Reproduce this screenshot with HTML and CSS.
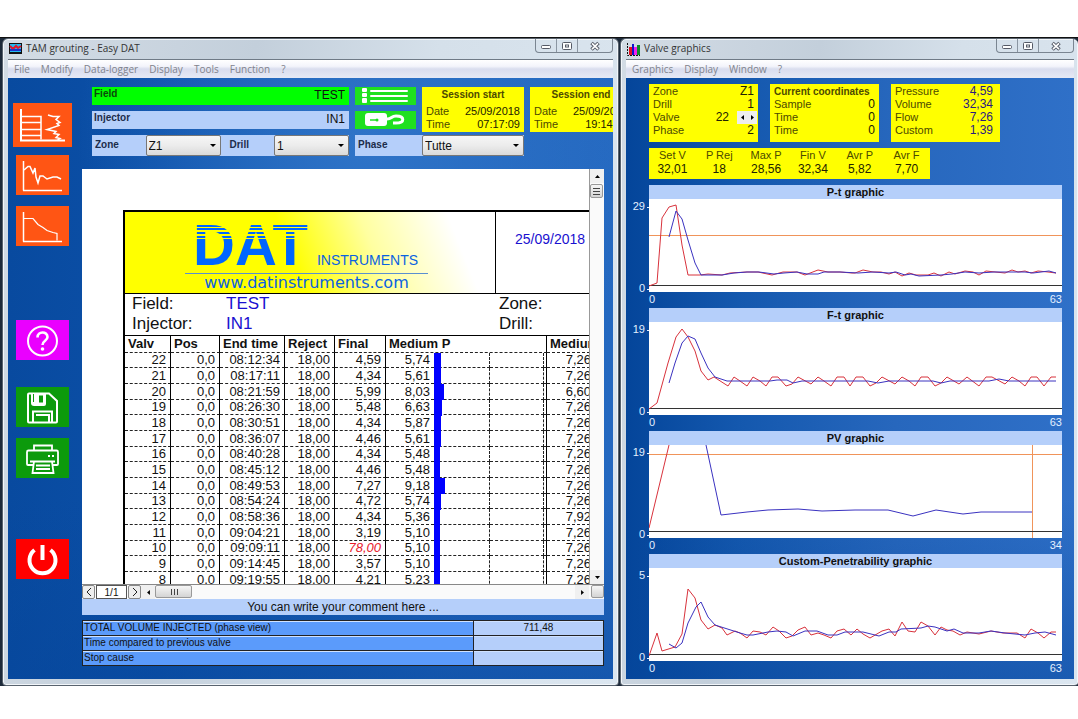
FILE: index.html
```html
<!doctype html>

<html lang="en">
<head>
	<meta charset="utf-8">

	<title>TAM grouting - Easy DAT</title>

	<link rel="stylesheet" href="styles.css">
</head>

<body>
	<div class="desktop">
		<section class="window">
			<header class="titlebar">
				<svg class="app-icon" width="13" height="11" viewBox="0 0 13 11"><rect width="13" height="11" fill="#111"/><rect x="1" y="1" width="11" height="8" fill="#22b8f0"/><path d="M1 3l3 3 3-3 2 2 3-2" fill="none" stroke="#e0142c" stroke-width="2"/><path d="M1 7h11" stroke="#1b30c8" stroke-width="2"/></svg>
				<h1>TAM grouting - Easy DAT</h1>
				<div class="controls">
					<button aria-label="Minimize"><svg width="12" height="10" viewBox="0 0 12 10"><rect x="1.500" y="4.500" width="9" height="3" rx="1" fill="#fff" stroke="#555a66"/></svg></button>
					<button aria-label="Maximize"><svg width="12" height="10" viewBox="0 0 12 10"><rect x="1.500" y="1.500" width="9" height="7" rx="1" fill="#fff" stroke="#555a66"/><rect x="4.500" y="4" width="3" height="2" fill="#fff" stroke="#555a66"/></svg></button>
					<button class="close" aria-label="Close"><svg width="12" height="10" viewBox="0 0 12 10"><path d="M2.500 2l7 6.500M9.500 2l-7 6.500" stroke="#555a66" stroke-width="3.600"/><path d="M3 2.400l6 5.700M9 2.400L3 8.100" stroke="#fff" stroke-width="1.600"/></svg></button>
				</div>
			</header>
			<nav class="menu">
				<button>File</button>
				<button>Modify</button>
				<button>Data-logger</button>
				<button>Display</button>
				<button>Tools</button>
				<button>Function</button>
				<button>?</button>
			</nav>
			<div class="workspace">
				<aside class="tools">
					<button class="tool orange big" aria-label="Stratigraphy"><svg width="59" height="44" viewBox="0 0 59 44" fill="none" stroke="#fff"><path d="M8 6v32" stroke-width="2"/><path d="M7 37.500h45" stroke-width="2"/><path d="M8 13.500h20v23M8 19.500h20M8 26.500h20M8 32.500h20" stroke-width="1.500"/><path d="M35 12l5 1.500 6 0-3 3 4 3-3 1 2 2-12 4 9 2-2 2 5 1-3 3 4 1-3 2" stroke-width="1.500"/></svg></button>
					<button class="tool orange" aria-label="Trend graphic"><svg width="53" height="39" viewBox="0 0 53 39" fill="none" stroke="#fff"><path d="M7.500 5v29.500" stroke-width="1.500"/><path d="M7 34.500h39" stroke-width="1.500"/><path d="M8 14l4-3.500 2 0 3 6.500 2-5 1 9 2 6 2-7 3 0 4 3 6-2 4 0 4 2" stroke-width="1.500"/></svg></button>
					<button class="tool orange" aria-label="Curve graphic"><svg width="53" height="39" viewBox="0 0 53 39" fill="none" stroke="#fff"><path d="M7.500 5v29.500" stroke-width="1.500"/><path d="M7 34.500h39" stroke-width="1.500"/><path d="M8 11.500h9l5 6 5 3 4 3 6 2 4 1v7" stroke-width="1.200"/></svg></button>
					<button class="tool magenta" aria-label="Help"><svg width="53" height="39" viewBox="0 0 53 39" fill="none" stroke="#fff"><circle cx="26.500" cy="20" r="14.500" stroke-width="2"/><path d="M21.500 16.500c0-6.500 10-6.500 10-.5 0 4-5 3.500-5 8" stroke-width="2.600"/><circle cx="26.500" cy="28" r="1.800" fill="#fff" stroke="none"/></svg></button>
					<button class="tool green save" aria-label="Save"><svg width="53" height="39" viewBox="0 0 53 39" fill="none" stroke="#fff" stroke-width="2"><path d="M13 5.500h20l8 7.500v20.500q0 1-1 1H13q-1 0-1-1v-27q0-1 1-1z"/><path d="M15 5h15v11q0 2-2 2H18q-3 0-3-3z" fill="#fff" stroke="none"/><path d="M23 7.500h4v7h-4zM17 6h1v8h-1z" fill="#0c9a0c" stroke="none"/><path d="M17 34V23.500h19V34M20 27h13v7"/></svg></button>
					<button class="tool green print" aria-label="Print"><svg width="53" height="39" viewBox="0 0 53 39" fill="none" stroke="#fff" stroke-width="1.800"><path d="M18 12V6.500h18V12"/><path d="M17 26h-5q-1 0-1-1V13q0-1.500 1.500-1.500h28q1.500 0 1.500 1.500v12q0 1-1 1h-4"/><path d="M18 22.500h18l1.500 11.500h-21zM14 22.500h25M20 26.500h14M20 30h14"/><path d="M32 17h2M36 17h2"/></svg></button>
					<button class="tool red" aria-label="Exit"><svg width="53" height="39" viewBox="0 0 53 39" fill="none" stroke="#fff" stroke-width="4"><path d="M18.500 10a13 13 0 1 0 16 0"/><path d="M26.500 5v15"/></svg></button>
				</aside>
				<main class="main">
					<form class="session">
						<div class="session-top">
							<div class="stack names">
								<div class="field active"><label for="field">Field</label><input id="field" value="TEST"></div>
								<div class="field"><label for="injector">Injector</label><input id="injector" value="IN1"></div>
							</div>
							<div class="stack">
								<button type="button" class="mini" aria-label="List"><svg width="60" height="18" viewBox="0 0 60 18"><g fill="#fff"><rect x="7" y="1" width="5" height="4" rx="1"/><rect x="7" y="6" width="5" height="4" rx="1"/><rect x="7" y="11" width="5" height="5" rx="1"/><rect x="15" y="3" width="38" height="2" rx="1"/><rect x="15" y="8" width="38" height="2" rx="1"/><rect x="15" y="13" width="38" height="2" rx="1"/></g></svg></button>
								<button type="button" class="mini" aria-label="Unlock"><svg width="60" height="18" viewBox="0 0 60 18"><rect x="10" y="2" width="22" height="13" rx="3" fill="#fff"/><path d="M32 8c5 0 4-3 9-3 9 0 9 7 0 7h-3" fill="none" stroke="#fff" stroke-width="3"/><path d="M15 9h6" stroke="#1fe01f" stroke-width="1.500"/><circle cx="22" cy="9" r="1.500" fill="#1fe01f"/></svg></button>
							</div>
							<div class="card time">
								<h2>Session start</h2>
								<div class="pair"><span>Date</span><b>25/09/2018</b></div>
								<div class="pair"><span>Time</span><b>07:17:09</b></div>
							</div>
							<div class="card time">
								<h2>Session end</h2>
								<div class="pair"><span>Date</span><b>25/09/2018</b></div>
								<div class="pair"><span>Time</span><b>19:14:32</b></div>
							</div>
						</div>
						<div class="filters">
							<div class="names filter-pair">
								<div class="filter"><label for="zone">Zone</label><div class="select"><select id="zone"><option>Z1</option></select></div></div>
								<div class="filter"><label for="drill">Drill</label><div class="select"><select id="drill"><option>1</option></select></div></div>
							</div>
							<div class="filter phase"><label for="phase">Phase</label><div class="select"><select id="phase"><option>Tutte</option></select></div></div>
						</div>
					</form>

					<div class="viewer">
						<div class="sheet">
							<div class="report">
								<div class="banner">
									<div class="brand">
										<div class="logo">
											<div class="logo-top"><span class="dat">DAT</span><span class="instruments">INSTRUMENTS</span></div>
											<a href="#">www.datinstruments.com</a>
										</div>
									</div>
									<div class="report-date">25/09/2018</div>
								</div>
								<div class="info">
									<span>Field:</span><em>TEST</em><span>Zone:</span>
									<span>Injector:</span><em>IN1</em><span>Drill:</span>
								</div>
								<table class="valves">
									<colgroup><col class="c-valve"><col class="c-pos"><col class="c-end"><col class="c-rej"><col class="c-final"><col class="c-press"><col class="c-bar"><col class="c-grid"><col class="c-edge"><col class="c-flow"></colgroup>
									<thead>
										<tr><th>Valv</th><th>Pos</th><th>End time</th><th>Reject</th><th>Final</th><th colspan="4">Medium P</th><th>Medium F</th></tr>
									</thead>
									<tbody>
										<tr><td>22</td><td>0,0</td><td>08:12:34</td><td>18,00</td><td>4,59</td><td>5,74</td><td><i style="width: 7px"></i></td><td></td><td></td><td>7,26</td></tr>
										<tr><td>21</td><td>0,0</td><td>08:17:11</td><td>18,00</td><td>4,34</td><td>5,61</td><td><i style="width: 7px"></i></td><td></td><td></td><td>7,26</td></tr>
										<tr><td>20</td><td>0,0</td><td>08:21:59</td><td>18,00</td><td>5,99</td><td>8,03</td><td><i style="width: 10px"></i></td><td></td><td></td><td>6,60</td></tr>
										<tr><td>19</td><td>0,0</td><td>08:26:30</td><td>18,00</td><td>5,48</td><td>6,63</td><td><i style="width: 8px"></i></td><td></td><td></td><td>7,26</td></tr>
										<tr><td>18</td><td>0,0</td><td>08:30:51</td><td>18,00</td><td>4,34</td><td>5,87</td><td><i style="width: 7px"></i></td><td></td><td></td><td>7,26</td></tr>
										<tr><td>17</td><td>0,0</td><td>08:36:07</td><td>18,00</td><td>4,46</td><td>5,61</td><td><i style="width: 7px"></i></td><td></td><td></td><td>7,26</td></tr>
										<tr><td>16</td><td>0,0</td><td>08:40:28</td><td>18,00</td><td>4,34</td><td>5,48</td><td><i style="width: 6px"></i></td><td></td><td></td><td>7,26</td></tr>
										<tr><td>15</td><td>0,0</td><td>08:45:12</td><td>18,00</td><td>4,46</td><td>5,48</td><td><i style="width: 6px"></i></td><td></td><td></td><td>7,26</td></tr>
										<tr><td>14</td><td>0,0</td><td>08:49:53</td><td>18,00</td><td>7,27</td><td>9,18</td><td><i style="width: 11px"></i></td><td></td><td></td><td>7,26</td></tr>
										<tr><td>13</td><td>0,0</td><td>08:54:24</td><td>18,00</td><td>4,72</td><td>5,74</td><td><i style="width: 7px"></i></td><td></td><td></td><td>7,26</td></tr>
										<tr><td>12</td><td>0,0</td><td>08:58:36</td><td>18,00</td><td>4,34</td><td>5,36</td><td><i style="width: 6px"></i></td><td></td><td></td><td>7,92</td></tr>
										<tr><td>11</td><td>0,0</td><td>09:04:21</td><td>18,00</td><td>3,19</td><td>5,10</td><td><i style="width: 6px"></i></td><td></td><td></td><td>7,26</td></tr>
										<tr><td>10</td><td>0,0</td><td>09:09:11</td><td>18,00</td><td class="alarm">78,00</td><td>5,10</td><td><i style="width: 6px"></i></td><td></td><td></td><td>7,26</td></tr>
										<tr><td>9</td><td>0,0</td><td>09:14:45</td><td>18,00</td><td>3,57</td><td>5,10</td><td><i style="width: 6px"></i></td><td></td><td></td><td>7,26</td></tr>
										<tr><td>8</td><td>0,0</td><td>09:19:55</td><td>18,00</td><td>4,21</td><td>5,23</td><td><i style="width: 6px"></i></td><td></td><td></td><td>7,26</td></tr>
									</tbody>
								</table>
							</div>
						</div>
						<div class="scroll-y">
							<button class="arrow" aria-label="Scroll up"><svg width="5" height="3" viewBox="0 0 7 4"><path d="M0 4l3.500-4L7 4z"/></svg></button>
							<div class="thumb"><svg width="7" height="8" viewBox="0 0 7 8"><path d="M0 1.500h7M0 4.500h7M0 7.500h7" stroke="#444"/></svg></div>
							<button class="arrow last" aria-label="Scroll down"><svg width="5" height="3" viewBox="0 0 7 4"><path d="M0 0l3.500 4L7 0z"/></svg></button>
						</div>
					</div>
					<div class="pager">
						<button class="page-btn" aria-label="Previous page"><svg width="6" height="8" viewBox="0 0 6 8"><path d="M5 0L1 4l4 4" fill="none" stroke="#222"/></svg></button>
						<input value="1/1" aria-label="Page">
						<button class="page-btn" aria-label="Next page"><svg width="6" height="8" viewBox="0 0 6 8"><path d="M1 0l4 4-4 4" fill="none" stroke="#222"/></svg></button>
						<button class="arrow" aria-label="Scroll left"><svg width="3" height="5" viewBox="0 0 4 7"><path d="M4 0L0 3.500 4 7z"/></svg></button>
						<div class="thumb wide"><svg width="8" height="6" viewBox="0 0 8 6"><path d="M1.500 0v6M4.500 0v6M7.500 0v6" stroke="#444"/></svg></div>
						<button class="arrow last" aria-label="Scroll right"><svg width="3" height="5" viewBox="0 0 4 7"><path d="M0 0l4 3.500L0 7z"/></svg></button>
						<div class="thumb corner"></div>
					</div>
					<input class="comment" aria-label="Comment" value="You can write your comment here ...">
					<table class="summary">
						<tr><th>TOTAL VOLUME INJECTED (phase view)</th><td>711,48</td></tr>
						<tr><th>Time compared to previous valve</th><td></td></tr>
						<tr><th>Stop cause</th><td></td></tr>
					</table>
				</main>
			</div>
		</section>

		<section class="window graphics">
			<header class="titlebar">
				<svg class="app-icon" width="13" height="13" viewBox="0 0 13 13"><path d="M.5 0v12.500H13" fill="none" stroke="#111" stroke-dasharray="2 1"/><path d="M2 4h3v8H2z" fill="#e01020"/><path d="M5 1h2v11H5z" fill="#1111cc"/><path d="M7 4h3v8H7z" fill="#ef20ef"/><path d="M10 2h3v10h-3z" fill="#0a8a2a"/></svg>
				<h1>Valve graphics</h1>
				<div class="controls">
					<button aria-label="Minimize"><svg width="12" height="10" viewBox="0 0 12 10"><rect x="1.500" y="4.500" width="9" height="3" rx="1" fill="#fff" stroke="#555a66"/></svg></button>
					<button aria-label="Maximize"><svg width="12" height="10" viewBox="0 0 12 10"><rect x="1.500" y="1.500" width="9" height="7" rx="1" fill="#fff" stroke="#555a66"/><rect x="4.500" y="4" width="3" height="2" fill="#fff" stroke="#555a66"/></svg></button>
					<button class="close" aria-label="Close"><svg width="12" height="10" viewBox="0 0 12 10"><path d="M2.500 2l7 6.500M9.500 2l-7 6.500" stroke="#555a66" stroke-width="3.600"/><path d="M3 2.400l6 5.700M9 2.400L3 8.100" stroke="#fff" stroke-width="1.600"/></svg></button>
				</div>
			</header>
			<nav class="menu">
				<button>Graphics</button>
				<button>Display</button>
				<button>Window</button>
				<button>?</button>
			</nav>
			<div class="workspace panels">
				<div class="cards">
					<div class="card data">
						<div class="pair"><span>Zone</span><b>Z1</b></div>
						<div class="pair"><span>Drill</span><b>1</b></div>
						<div class="pair"><span>Valve</span><b>22</b><div class="spin"><button aria-label="Previous valve"><svg width="3" height="5" viewBox="0 0 3 5"><path d="M3 0L0 2.500 3 5z"/></svg></button><button aria-label="Next valve"><svg width="3" height="5" viewBox="0 0 3 5"><path d="M0 0l3 2.500L0 5z"/></svg></button></div></div>
						<div class="pair"><span>Phase</span><b>2</b></div>
					</div>
					<div class="card data">
						<h2>Current coordinates</h2>
						<div class="pair"><span>Sample</span><b>0</b></div>
						<div class="pair"><span>Time</span><b>0</b></div>
						<div class="pair"><span>Time</span><b>0</b></div>
					</div>
					<div class="card data measured">
						<div class="pair"><span>Pressure</span><b>4,59</b></div>
						<div class="pair"><span>Volume</span><b>32,34</b></div>
						<div class="pair"><span>Flow</span><b>7,26</b></div>
						<div class="pair"><span>Custom</span><b>1,39</b></div>
					</div>
				</div>
				<div class="card totals">
					<div><span>Set V</span><b>32,01</b></div>
					<div><span>P Rej</span><b>18</b></div>
					<div><span>Max P</span><b>28,56</b></div>
					<div><span>Fin V</span><b>32,34</b></div>
					<div><span>Avr P</span><b>5,82</b></div>
					<div><span>Avr F</span><b>7,70</b></div>
				</div>

				<div class="chart">
					<h2>P-t graphic</h2>
					<div class="axis-y"><span>29</span><span>0</span></div>
					<svg class="plot" viewBox="0 0 413 93" preserveAspectRatio="none">
						<path class="limit" d="M0 36.500h413"/>
						<path class="zero" d="M0 86.500h413"/>
						<path class="raw" d="M0 87L8 84 13 19 20 8 27 6 33 46 39 76 51 76 59 75 73 76 81 74 98 73 109 73 123 76 134 73 148 73 156 76 169 71 179 73 191 73 203 74 206 74 214 71 224 73 232 73 240 75 246 73 253 77 260 74 267 76 279 76 285 74 292 77 300 73 306 75 316 72 324 73 330 76 337 72 356 74 363 71 369 73 376 72 382 74 389 72 399 73 407 74"/>
						<path class="mean" d="M20 38L27 12 33 20 39 41 46 64 52 76 73 76 85 74 98 73 110 73 125 75 135 74 148 73 158 75 169 75 175 73 191 73 209 74 224 73 240 74 247 73 256 76 262 75 270 77 292 76 303 75 316 73 330 74 345 73 365 73 376 73 384 74 400 72 407 74"/>
					</svg>
					<div class="axis-x"><span>0</span><span>63</span></div>
				</div>
				<div class="chart">
					<h2>F-t graphic</h2>
					<div class="axis-y"><span>19</span><span>0</span></div>
					<svg class="plot" viewBox="0 0 413 93" preserveAspectRatio="none">
						<path class="zero" d="M0 86.500h413"/>
						<path class="raw" d="M0 87L8 81 19 41 27 15 33 7 39 15 46 29 52 49 59 58 65 55 79 64 85 55 91 59 98 64 104 55 111 59 117 64 123 55 129 55 137 64 143 62 149 55 162 62 169 55 175 59 182 64 188 55 195 55 201 64 207 55 214 55 221 64 227 61 233 55 246 62 253 55 260 59 266 64 272 55 279 55 286 64 292 61 298 55 310 62 318 55 330 64 337 55 343 55 356 62 363 55 370 59 376 64 382 55 388 55 395 64 402 55 407 55"/>
						<path class="mean" d="M20 61L26 41 33 21 39 14 46 17 52 31 59 46 66 55 78 59 121 59 128 58 138 58 144 61 153 59 219 59 229 61 240 59 284 59 292 61 301 59 340 59 350 57 360 59 407 59"/>
					</svg>
					<div class="axis-x"><span>0</span><span>63</span></div>
				</div>
				<div class="chart">
					<h2>PV graphic</h2>
					<div class="axis-y"><span>19</span><span>0</span></div>
					<svg class="plot" viewBox="0 0 413 93" preserveAspectRatio="none">
						<path class="limit" d="M0 9.500h413"/>
						<path class="limit" d="M383.500 0v93"/>
						<path class="zero" d="M0 86.500h413"/>
						<path class="raw" d="M0 83L20 0"/>
						<path class="mean" d="M57 0L72 70 98 67 119 65 149 64 173 66 206 65 239 65 264 71 287 65 314 69 332 67 383 67"/>
					</svg>
					<div class="axis-x"><span>0</span><span>34</span></div>
				</div>
				<div class="chart">
					<h2>Custom-Penetrability graphic</h2>
					<div class="axis-y"><span>5</span><span>0</span></div>
					<svg class="plot" viewBox="0 0 413 93" preserveAspectRatio="none">
						<path class="zero" d="M0 86.500h413"/>
						<path class="raw" d="M0 88L8 65 13 83 26 79 33 66 39 21 46 30 52 52 59 61 66 57 73 60 78 67 86 63 91 65 98 70 104 63 111 64 117 67 124 59 130 63 137 70 143 68 149 62 156 59 162 67 169 65 175 67 182 70 188 63 195 61 202 67 208 61 214 66 221 70 233 63 240 61 246 68 253 54 259 63 266 64 272 54 279 58 286 67 292 59 298 62 304 63 311 67 318 64 330 66 342 63 354 65 368 65 376 70 382 61 389 65 395 70 402 64 407 64"/>
						<path class="mean" d="M20 76L27 80 33 75 39 55 47 39 52 34 59 49 66 57 91 65 98 67 104 67 119 64 128 63 137 64 144 68 156 63 168 63 179 67 188 67 196 64 214 64 230 68 240 64 247 64 252 61 272 60 279 58 286 59 298 63 305 61 314 65 330 65 342 63 356 65 376 67 386 65 396 64 407 67"/>
					</svg>
					<div class="axis-x"><span>0</span><span>63</span></div>
				</div>
			</div>
		</section>
	</div>
</body>
</html>
```

FILE: styles.css
```css
* { box-sizing: border-box; }

body {
	background: #fff;
	color: #111;
	font-family: "Liberation Sans", Arial, sans-serif;
	font-size: 11px;
	margin: 0;
	padding: 37px 0 0;
}

button,
input,
select {
	background: none;
	border: 0;
	color: inherit;
	font: inherit;
	margin: 0;
	min-width: 0;
	padding: 0;
}

h1,
h2 {
	font-size: inherit;
	margin: 0;
}

svg { display: block; }

.desktop {
	background: #1d2a3a;
	border-top: 1px solid #111;
	display: grid;
	gap: 1px;
	grid-template-columns: 617fr 458fr;
	padding-left: 2px;
}

/* windows */
.window {
	background: linear-gradient(100deg, #d3dce5 0%, #c3cfdb 35%, #d5e0ea 60%, #dbe6f0 100%);
	border: 1px solid #59636e;
	border-radius: 6px 6px 4px 4px;
	box-shadow: inset 0 0 0 1px #f2f6fa;
	display: flex;
	flex-direction: column;
	min-width: 0;
	padding: 0 5px 6px;
}

.graphics {
	border-right: 0;
	padding-right: 4px;
}

.titlebar {
	color: #333;
	display: flex;
	font-family: "Open Sans", "Noto Sans", sans-serif;
	height: 20px;
}

.titlebar h1 {
	flex: 1;
	font-size: 10px;
	font-weight: normal;
	line-height: 19px;
}

.app-icon {
	margin: 4px 4px 0 1px;
}

.controls {
	border: 1px solid #7a8591;
	border-radius: 0 0 4px 4px;
	border-top: 0;
	display: flex;
	height: 14px;
}

.controls button {
	align-items: center;
	border-right: 1px solid #8b96a2;
	display: flex;
	justify-content: center;
	width: 21px;
}

.controls .close {
	border: 0;
	width: 34px;
}

.menu {
	background: linear-gradient(#fff 0%, #f3f4fb 35%, #d9ddee 50%, #e6e9f5 100%);
	border-top: 1px solid #6f7a86;
	color: #80838c;
	display: flex;
	font-family: "Open Sans", "Noto Sans", sans-serif;
	font-size: 10px;
	gap: 11px;
	height: 19px;
	padding: 0 6px;
}

.workspace {
	background:
		linear-gradient(rgba(6, 70, 155, 0) 70%, rgba(6, 70, 155, .5) 100%),
		radial-gradient(circle at 60% 10%, #2f74c8 0%, rgba(47, 116, 200, 0) 45%),
		linear-gradient(90deg, #084a9f 0%, #0c50a8 25%, #1f63bb 70%, #2468c0 100%);
	display: flex;
	flex: 1;
	overflow: hidden;
}

/* left column of commands */
.tools {
	align-items: center;
	display: flex;
	flex: none;
	flex-direction: column;
	gap: 11px;
	padding: 25px 5px 0 0;
	width: 74px;
}

.tool {
	height: 40px;
	overflow: hidden;
	width: 53px;
}

.tool.big {
	height: 44px;
	margin-bottom: -3px;
	width: 59px;
}

.orange { background: #ff5514; }
.green { background: #0c9a0c; }

.magenta {
	background: #ea00ff;
	margin-top: 63px;
}

.save { margin-top: 16px; }

.red {
	background: #f00;
	margin-top: 50px;
}

.main {
	flex: 1;
	min-width: 0;
	padding: 9px 9px 12px 0;
}

.session {
	margin: 0 -9px 13px 0;
	overflow: hidden;
	padding-left: 10px;
}

.session-top,
.filters {
	display: flex;
	gap: 6px;
}

.session-top { margin-bottom: 3px; }

.names {
	flex: none;
	width: 257px;
}

.stack {
	display: flex;
	flex-direction: column;
	gap: 6px;
}

.field {
	background: #b5cffa;
	color: #1c2c4a;
	display: flex;
	height: 18px;
	justify-content: space-between;
	padding: 0 4px 0 2px;
}

.field.active {
	background: #0f0;
	color: #0a4a0a;
}

.field label,
.filter label {
	font-size: 10px;
	font-weight: bold;
	line-height: 14px;
}

.field input {
	color: #111;
	font-size: 12px;
	height: 16px;
	text-align: right;
	width: 150px;
}

.mini {
	background: #1fe01f;
	height: 18px;
	width: 61px;
}

.card {
	background: #ff0;
	color: #4c4a00;
}

.card h2 {
	font-size: 10px;
	line-height: 13px;
}

.card b {
	color: #222200;
	font-weight: normal;
}

.pair {
	display: flex;
	justify-content: space-between;
	line-height: 13px;
}

.time {
	flex: none;
	height: 45px;
	padding: 1px 4px;
	width: 102px;
}

.time h2 {
	margin-bottom: 4px;
	text-align: center;
}

.filter-pair {
	display: flex;
}

.filter {
	background: #b5cffa;
	color: #1c2c4a;
	display: flex;
	flex: 1;
	height: 21px;
}

.filter label {
	flex: 1;
	line-height: 20px;
	padding-left: 3px;
}

.filter + .filter label { padding-left: 9px; }

.phase {
	flex: none;
	width: 169px;
}

.select {
	background: linear-gradient(#f6f6f6, #ececec 50%, #dadada);
	border: 1px solid #777;
	border-radius: 2px;
	position: relative;
	width: 75px;
}

.phase .select { width: 102px; }

.select::after {
	border: 3px solid transparent;
	border-bottom: 0;
	border-top-color: #000;
	content: '';
	pointer-events: none;
	position: absolute;
	right: 4px;
	top: 8px;
}

.select select {
	appearance: none;
	color: #111;
	font-size: 12px;
	height: 19px;
	padding-left: 2px;
	width: 100%;
}

/* printed report */
.viewer {
	display: flex;
	height: 415px;
}

.sheet {
	background: #fff;
	border-right: 1px solid #999;
	flex: 1;
	min-width: 0;
	overflow: hidden;
	padding: 41px 0 0 41px;
}

.report {
	border: solid #000;
	border-width: 2px 0 0 2px;
	width: 700px;
}

.banner {
	border-bottom: 1px solid #000;
	display: flex;
	height: 82px;
}

.brand {
	background: linear-gradient(68deg, #ff0 45%, #ffffa0 66%, #fff 88%);
	border-right: 1px solid #000;
	padding: 10px 0 0 60px;
	width: 371px;
}

.logo {
	color: #0a62e0;
	width: 243px;
}

.logo-top {
	align-items: baseline;
	border-bottom: 1px solid #5a8fd0;
	display: flex;
	gap: 9px;
	height: 52px;
	padding-left: 8px;
}

.dat {
	background: linear-gradient(#06f 5px, transparent 5px, transparent 6px, #06f 6px, #06f 8px, transparent 8px, transparent 10px, #06f 10px, #06f 12px, transparent 12px, transparent 14px, #06f 14px, #06f 16px, transparent 16px, transparent 17px, #06f 17px);
	background-clip: text;
	-webkit-background-clip: text;
	color: transparent;
	font-size: 58px;
	font-weight: bold;
	line-height: 46px;
}

.instruments { font-size: 14px; }

.logo a {
	color: inherit;
	display: block;
	font-family: "DejaVu Sans", sans-serif;
	font-size: 16px;
	line-height: 17px;
	text-align: center;
	text-decoration: none;
}

.report-date {
	color: #1a10d0;
	font-size: 14px;
	line-height: 16px;
	padding: 19px 0 0 19px;
}

.info {
	display: grid;
	font-size: 17px;
	grid-template-columns: 94px 273px 1fr;
	grid-template-rows: 20px 20px;
	height: 41px;
	line-height: 19px;
	padding-left: 7px;
}

.info em {
	color: #1a10d0;
	font-style: normal;
}

.valves {
	border-collapse: separate;
	border-spacing: 0;
	border-top: 1px solid #000;
	font-size: 13px;
	table-layout: fixed;
	width: 470px;
}

.c-valve { width: 46px; }
.c-pos { width: 49px; }
.c-end { width: 65px; }
.c-rej { width: 50px; }
.c-final { width: 51px; }
.c-press { width: 48px; }
.c-bar { width: 56px; }
.c-grid { width: 54px; }
.c-edge { width: 3px; }
.c-flow { width: 48px; }

.valves th,
.valves td {
	border-bottom: 1px dashed #222;
	border-right: 1px solid #000;
	line-height: 14px;
	padding: 0 4px 0 0;
	text-align: right;
	white-space: nowrap;
}

.valves th {
	height: 17px;
	padding: 0 0 0 3px;
	text-align: left;
}

.valves td { height: 16px; }

.valves tr:nth-child(3n+1) td { height: 15px; }

.valves td:nth-child(6) { border-right: 0; }

.valves td:nth-child(7),
.valves td:nth-child(8) {
	border-right: 1px dashed #222;
}

.valves td:nth-child(7),
.valves td:nth-child(9) {
	padding: 0;
}

.valves td:nth-child(7) { vertical-align: top; }

.valves th:last-child,
.valves td:last-child {
	border-right: 0;
}

.valves i {
	background: #00f;
	display: block;
	height: 16px;
	margin-bottom: -2px;
}

.valves .alarm {
	color: #e8202c;
	font-style: italic;
}

/* scroll bars and paging */
.scroll-y {
	background: #fafafa;
	display: flex;
	flex-direction: column;
	width: 14px;
}

.arrow {
	align-items: center;
	background: #f0f0f0;
	display: flex;
	flex: none;
	height: 14px;
	justify-content: center;
	width: 14px;
}

.arrow.last { margin: auto 0 0; }

.thumb {
	align-items: center;
	background: linear-gradient(#f6f6f6, #d4d4d4);
	border: 1px solid #999;
	border-radius: 2px;
	display: flex;
	flex: none;
	height: 14px;
	justify-content: center;
	margin: 1px 1px 0 0;
}

.pager {
	background: #fafafa;
	border-top: 1px solid #888;
	display: flex;
	height: 15px;
}

.pager .arrow.last { margin: 0 2px 0 auto; }

.page-btn {
	align-items: center;
	background: #eee;
	border: 1px solid #888;
	border-radius: 2px;
	display: flex;
	justify-content: center;
	width: 13px;
}

.pager input {
	background: #fff;
	border: 1px solid #555;
	font-size: 10px;
	height: 14px;
	margin: 0 1px;
	text-align: center;
	width: 31px;
}

.pager .thumb {
	height: 13px;
	margin: 0;
}

.thumb.wide { width: 37px; }
.thumb.corner { width: 13px; }

.comment {
	background: #b5cffa;
	display: block;
	font-size: 12px;
	height: 16px;
	margin-bottom: 5px;
	text-align: center;
	width: 100%;
}

.summary {
	border: 1px solid #222;
	border-collapse: collapse;
	font-size: 10px;
	width: 100%;
}

.summary th,
.summary td {
	border: 1px solid #222;
	box-shadow: inset 0 1px #cfe2ff;
	height: 15px;
	line-height: 14px;
	padding: 0 1px;
}

.summary th {
	background: #5b9bfb;
	font-weight: normal;
	text-align: left;
	width: 75%;
}

.summary td {
	background: #b5cffa;
	text-align: center;
}

/* valve graphics */
.panels {
	background:
		linear-gradient(rgba(6, 70, 155, 0) 70%, rgba(6, 70, 155, .5) 100%),
		linear-gradient(90deg, #04459a 0%, #1458ae 25%, #2767bd 60%, #2f70c8 100%);
	flex-direction: column;
	padding: 6px 12px 2px 23px;
}

.cards {
	display: flex;
	gap: 12px;
	margin-bottom: 6px;
}

.data {
	height: 58px;
	padding: 1px 4px;
	width: 109px;
}

.data b,
.totals b {
	font-size: 12px;
}

.data .pair { height: 13px; }

.measured { padding-right: 7px; }
.measured b { color: #2a1a80; }

.spin {
	background: #eee;
	display: flex;
	height: 13px;
	margin-right: -3px;
	width: 20px;
}

.pair > b:nth-last-child(2) {
	flex: 1;
	padding-right: 8px;
	text-align: right;
}

.spin button {
	align-items: center;
	display: flex;
	flex: 1;
	justify-content: center;
}

.totals {
	display: flex;
	height: 31px;
	margin-bottom: 6px;
	text-align: center;
	width: 281px;
}

.totals div { flex: 1; }

.totals span,
.totals b {
	display: block;
	line-height: 14px;
}

.chart {
	display: grid;
	grid-template-columns: 23px 1fr;
	grid-template-rows: 14px 93px 16px;
	margin-left: -23px;
}

.chart h2 {
	background: #b5cffa;
	grid-column: 2;
	line-height: 14px;
	text-align: center;
}

.axis-y,
.axis-x {
	color: #e4f0ff;
	display: flex;
	justify-content: space-between;
	line-height: 14px;
}

.axis-y {
	flex-direction: column;
	margin-bottom: -3px;
	text-align: right;
}

.axis-y span::after {
	border-top: 1px solid #e4f0ff;
	content: '';
	display: inline-block;
	margin-left: 2px;
	vertical-align: middle;
	width: 2px;
}

.axis-x { grid-column: 2; }

.plot {
	background: #fff;
	height: 93px;
	width: 100%;
}

.plot path {
	fill: none;
	stroke-width: 1;
	vector-effect: non-scaling-stroke;
}

.plot .limit { stroke: #f0945a; }
.plot .zero { stroke: #333; }
.plot .raw { stroke: #d8323c; }
.plot .mean { stroke: #3a32c0; }
```
